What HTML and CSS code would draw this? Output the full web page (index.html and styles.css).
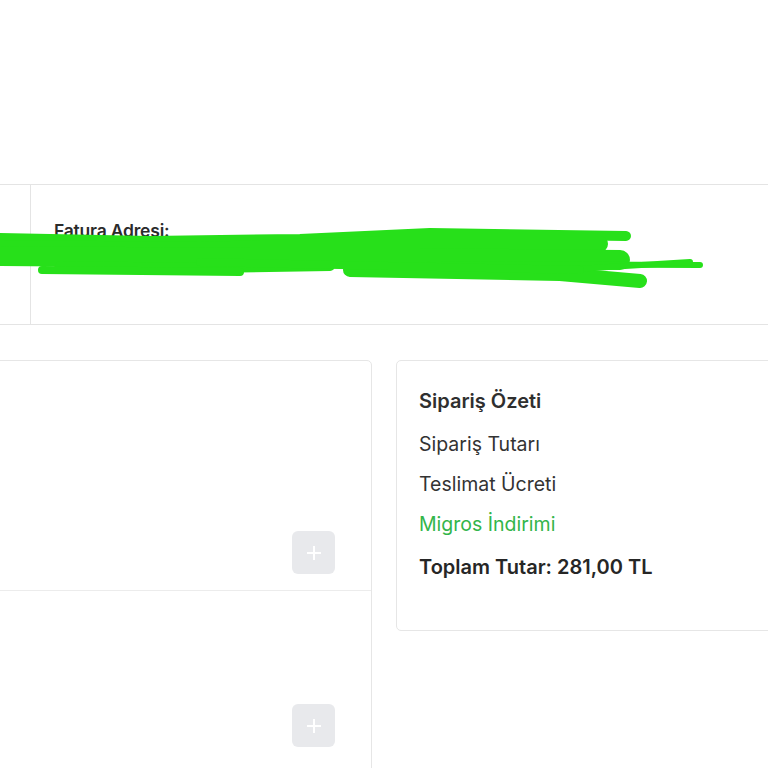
FILE: index.html
```html
<!DOCTYPE html>
<html lang="tr">
<head>
<meta charset="utf-8">
<title>Sipariş Özeti</title>
<link rel="stylesheet" href="styles.css">
</head>
<body>
<div class="page">
  <div class="top-space"></div>
  <section class="address-row">
    <div class="address-side"></div>
    <div class="address-main">
      <div class="address-title">Fatura Adresi:</div>
      <div class="address-text">Adres bilgisi</div>
    </div>
    <svg class="scribble" width="768" height="80" viewBox="0 220 768 80" aria-hidden="true">
      <path d="M0 238 L150 241 L300 239 L430 233 L626 236" />
      <path class="w16" d="M0 248 L200 250 L380 244 L600 244" />
      <path class="w20" d="M0 256 L250 258 L420 258 L620 260" />
      <path class="w10" d="M60 266 L200 268 L330 266" />
      <path class="w8" d="M42 270 L240 272" />
      <path class="w14" d="M350 270 L560 274 L640 281" />
      <path class="w6" d="M430 264 L700 265" />
      <path class="w6" d="M560 270 L690 262" />
      <path class="w8" d="M200 262 L580 270" />
    </svg>
  </section>

  <main class="content">
    <div class="products">
      <div class="product">
        <button class="add-btn" type="button" aria-label="Ekle">
          <svg width="18" height="18" viewBox="0 0 18 18"><path d="M9 2v14M2 9h14"/></svg>
        </button>
      </div>
      <div class="product product-second">
        <button class="add-btn" type="button" aria-label="Ekle">
          <svg width="18" height="18" viewBox="0 0 18 18"><path d="M9 2v14M2 9h14"/></svg>
        </button>
      </div>
    </div>

    <aside class="summary">
      <h2 class="summary-title">Sipariş Özeti</h2>
      <ul class="summary-list">
        <li>Sipariş Tutarı</li>
        <li>Teslimat Ücreti</li>
        <li class="discount">Migros İndirimi</li>
      </ul>
      <div class="summary-total">Toplam Tutar: 281,00 TL</div>
    </aside>
  </main>
</div>
</body>
</html>
```

FILE: styles.css
```css
* { box-sizing: border-box; }

html, body {
  margin: 0;
  padding: 0;
  background: #ffffff;
}

body {
  font-family: Inter, "Noto Sans", "Liberation Sans", sans-serif;
  color: #333333;
  overflow: hidden;
  width: 768px;
  height: 768px;
}

.page {
  width: 768px;
}

.top-space {
  height: 184px;
}

.address-row {
  position: relative;
  display: flex;
  height: 141px;
  border-top: 1px solid #e4e4e4;
  border-bottom: 1px solid #e4e4e4;
}

.address-side {
  width: 31px;
  border-right: 1px solid #e4e4e4;
}

.address-main {
  padding: 35px 0 0 23px;
}

.address-title {
  font-size: 17.5px;
  font-weight: 600;
  line-height: 22px;
  color: #2b2b2b;
  letter-spacing: -0.2px;
}

.address-text {
  margin-top: 12px;
  font-size: 13px;
  color: #555555;
}

.scribble {
  position: absolute;
  left: 0;
  top: 35px;
  overflow: visible;
}

.scribble path {
  fill: none;
  stroke: #27e01a;
  stroke-width: 10;
  stroke-linecap: round;
  stroke-linejoin: round;
}

.scribble .w6 { stroke-width: 6; }
.scribble .w8 { stroke-width: 8; }
.scribble .w10 { stroke-width: 10; }
.scribble .w14 { stroke-width: 14; }
.scribble .w16 { stroke-width: 16; }
.scribble .w20 { stroke-width: 20; }

.content {
  display: flex;
  align-items: flex-start;
  gap: 24px;
  margin-top: 35px;
}

.products {
  width: 392px;
  margin-left: -20px;
  flex: none;
  border: 1px solid #e6e6e6;
  border-radius: 5px;
  height: 460px;
}

.product {
  height: 230px;
  display: flex;
  justify-content: flex-end;
  align-items: flex-end;
  padding: 0 36px 16px 0;
  border-bottom: 1px solid #ececec;
}

.product-second {
  height: 172px;
  border-bottom: none;
}

.add-btn {
  width: 43px;
  height: 43px;
  border: none;
  border-radius: 6px;
  background: #e8e9ec;
  display: flex;
  align-items: center;
  justify-content: center;
  padding: 0;
}

.add-btn path {
  stroke: #ffffff;
  stroke-width: 2;
  fill: none;
}

.summary {
  width: 400px;
  flex: none;
  height: 271px;
  border: 1px solid #e6e6e6;
  border-radius: 5px;
  padding: 28px 0 0 22px;
}

.summary-title {
  margin: 0;
  font-size: 20px;
  font-weight: 600;
  line-height: 24px;
  color: #2f2f2f;
}

.summary-list {
  list-style: none;
  margin: 19px 0 0;
  padding: 0;
  display: flex;
  flex-direction: column;
  gap: 16px;
}

.summary-list li {
  font-size: 19.5px;
  line-height: 24px;
  color: #333333;
}

.summary-list .discount {
  color: #33b54a;
}

.summary-total {
  margin-top: 19px;
  font-size: 20px;
  font-weight: 600;
  line-height: 24px;
  color: #262626;
}
```
